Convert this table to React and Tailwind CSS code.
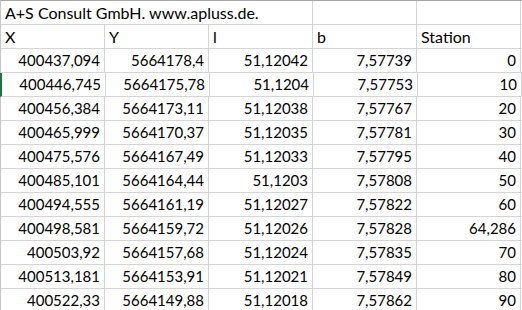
const rows = [
  ["400437,094", "5664178,4", "51,12042", "7,57739", "0"],
  ["400446,745", "5664175,78", "51,1204", "7,57753", "10"],
  ["400456,384", "5664173,11", "51,12038", "7,57767", "20"],
  ["400465,999", "5664170,37", "51,12035", "7,57781", "30"],
  ["400475,576", "5664167,49", "51,12033", "7,57795", "40"],
  ["400485,101", "5664164,44", "51,1203", "7,57808", "50"],
  ["400494,555", "5664161,19", "51,12027", "7,57822", "60"],
  ["400498,581", "5664159,72", "51,12026", "7,57828", "64,286"],
  ["400503,92", "5664157,68", "51,12024", "7,57835", "70"],
  ["400513,181", "5664153,91", "51,12021", "7,57849", "80"],
  ["400522,33", "5664149,88", "51,12018", "7,57862", "90"],
];

const headers = ["X", "Y", "l", "b", "Station"];

// numbers are right aligned and a touch smaller, text left aligned
function Cell({ children, right, width = "w-[104px]" }) {
  return (
    <div
      className={`${width} h-full shrink-0 border-r border-[#d4d4d4] flex items-end pb-[3px] px-[4px] whitespace-nowrap overflow-visible ${
        right ? "justify-end text-[15px]" : "justify-start text-[16px]"
      }`}
    >
      <span className="leading-[17px]">{children}</span>
    </div>
  );
}

export default function App() {
  return (
    <div
      className="w-[522px] h-[310px] overflow-hidden bg-white text-black"
      style={{ fontFamily: "Lato, 'Open Sans', sans-serif" }}
    >
      <div className="border-t border-[#a6a6a6] border-l border-l-[#c6c6c6] h-full flex flex-col">
        {/* title row */}
        <div className="h-[24px] shrink-0 flex border-b border-[#d4d4d4]">
          <Cell width="w-[312px]">A+S Consult GmbH. www.apluss.de.</Cell>
          <Cell />
          <Cell />
        </div>

        {/* header row */}
        <div className="h-[24px] shrink-0 flex border-b border-[#d4d4d4]">
          {headers.map((h) => (
            <Cell key={h}>{h}</Cell>
          ))}
        </div>

        {rows.map((r, i) => (
          <div
            key={i}
            className={`h-[24px] shrink-0 flex border-b border-[#d4d4d4] ${
              i === 1 ? "-ml-px border-l-2 border-l-[#217346]" : ""
            }`}
          >
            {r.map((v, j) => (
              <Cell key={j} right>
                {v}
              </Cell>
            ))}
          </div>
        ))}

        <div className="h-[24px] shrink-0 flex">
          {headers.map((h) => (
            <Cell key={h} />
          ))}
        </div>
      </div>
    </div>
  );
}
